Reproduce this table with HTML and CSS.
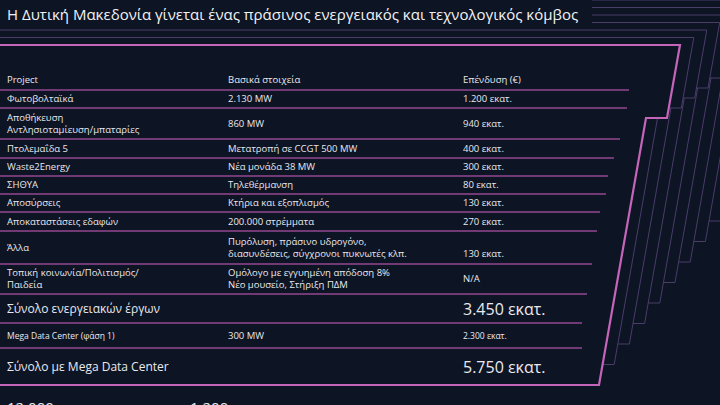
FILE: index.html
```html
<!DOCTYPE html>
<html lang="el">
<head>
<meta charset="utf-8">
<title>Δυτική Μακεδονία</title>
<link rel="stylesheet" href="styles.css">
</head>
<body>
<div class="slide">
  <svg class="deco" width="720" height="405" viewBox="0 0 720 405">
    <g class="echo">
      <polygon points="-5,-15 790,-15 783,38 752.8,38 720.6,221 -5,221"/>
      <polygon points="-5,-7.5 771,-7.5 761.5,48 739.5,48 705.4,241.5 -5,241.5"/>
      <polygon points="-5,0 758.4,0 748.1,58 726.1,58 690.2,262 -5,262"/>
      <polygon points="-5,7.5 745.6,7.5 734.8,68 712.8,68 675,282.5 -5,282.5"/>
      <polygon points="-5,15 732.6,15 721.4,78 699.4,78 659.8,303 -5,303"/>
      <polygon points="-5,22.5 719.7,22.5 708,88 686,88 644.6,323.5 -5,323.5"/>
      <polygon points="-5,30 706.8,30 694.7,98 672.7,98 629.4,344 -5,344"/>
      <polygon points="-5,37.5 693.8,37.5 681.3,108 659.3,108 614.2,364.5 -5,364.5"/>
    </g>
    <polygon class="main" points="-5,45 680,45 667,118 646,118 599,385 -5,385"/>
  </svg>

  <h1 class="title">Η Δυτική Μακεδονία γίνεται ένας πράσινος ενεργειακός και τεχνολογικός κόμβος</h1>

  <div class="table">
    <div class="row r-head"><div>Project</div><div>Βασικά στοιχεία</div><div>Επένδυση (€)</div></div>
    <div class="row r1"><div>Φωτοβολταϊκά</div><div>2.130 MW</div><div>1.200 εκατ.</div></div>
    <div class="row r2 top"><div>Αποθήκευση<br>Αντλησιοταμίευση/μπαταρίες</div><div>860 MW</div><div>940 εκατ.</div></div>
    <div class="row r3"><div>Πτολεμαΐδα 5</div><div>Μετατροπή σε CCGT 500 MW</div><div>400 εκατ.</div></div>
    <div class="row r4"><div>Waste2Energy</div><div>Νέα μονάδα 38 MW</div><div>300 εκατ.</div></div>
    <div class="row r5"><div>ΣΗΘΥΑ</div><div>Τηλεθέρμανση</div><div>80 εκατ.</div></div>
    <div class="row r6"><div>Αποσύρσεις</div><div>Κτήρια και εξοπλισμός</div><div>130 εκατ.</div></div>
    <div class="row r7"><div>Αποκαταστάσεις εδαφών</div><div>200.000 στρέμματα</div><div>270 εκατ.</div></div>
    <div class="row r8 top"><div>Άλλα</div><div>Πυρόλυση, πράσινο υδρογόνο,<br>διασυνδέσεις, σύγχρονοι πυκνωτές κλπ.</div><div class="low">130 εκατ.</div></div>
    <div class="row r9 top"><div>Τοπική κοινωνία/Πολιτισμός/<br>Παιδεία</div><div>Ομόλογο με εγγυημένη απόδοση 8%<br>Νέο μουσείο, Στήριξη ΠΔΜ</div><div>N/A</div></div>
    <div class="row r10 total"><div class="total-label">Σύνολο ενεργειακών έργων</div><div></div><div class="total-value">3.450 εκατ.</div></div>
    <div class="row r11 small"><div>Mega Data Center (φάση 1)</div><div class="mid">300 MW</div><div>2.300 εκατ.</div></div>
    <div class="row r12 total"><div class="total-label">Σύνολο με Mega Data Center</div><div></div><div class="total-value">5.750 εκατ.</div></div>
  </div>

  <div class="below"><span class="b1">12.000</span><span class="b2">1.200</span></div>
</div>
</body>
</html>
```

FILE: styles.css
```css
html, body {
  margin: 0;
  padding: 0;
  background: #0d1424;
}

.slide {
  position: relative;
  width: 720px;
  height: 405px;
  overflow: hidden;
  background: #0d1424;
  color: #e9e9ee;
  font-family: "Open Sans", "Noto Sans", sans-serif;
}

.deco {
  position: absolute;
  left: 0;
  top: 0;
  z-index: 0;
}

.deco .echo polygon {
  fill: #0d1424;
  stroke: #4a3d68;
  stroke-width: 1;
}

.deco .main {
  fill: #0d1424;
  stroke: #c565b9;
  stroke-width: 2.2;
}

.title {
  position: relative;
  z-index: 1;
  margin: 0;
  width: 592px;
  height: 27px;
  padding-left: 7px;
  box-sizing: border-box;
  background: #0d1424;
  font-weight: 400;
  font-size: 15px;
  line-height: 28px;
  white-space: nowrap;
  color: #f2f2f4;
}

.table {
  position: relative;
  z-index: 1;
  margin-top: 43px;
  font-size: 9.5px;
  line-height: 12px;
}

.row {
  display: grid;
  grid-template-columns: 221px 235px 1fr;
  align-items: center;
  padding-left: 7px;
  box-sizing: border-box;
  border-bottom: 2px solid #713a74;
  white-space: nowrap;
}

.low {
  padding-top: 12px;
}

.r-head { height: 21px; width: 629px; }
.r1 { height: 18px; width: 627px; }
.r2 { height: 31px; width: 620px; }
.r3 { height: 19px; width: 614px; }
.r4 { height: 18px; width: 608px; }
.r5 { height: 18px; width: 606px; }
.r6 { height: 18px; width: 600px; }
.r7 { height: 19px; width: 597px; }
.r8 { height: 33px; width: 592px; }
.r9 { height: 30px; width: 587px; }
.r10 { height: 29px; width: 582px; }
.r11 { height: 25px; width: 582px; }
.r12 { height: 36px; width: 582px; border-bottom: none; }

.total-label {
  font-size: 12px;
}

.total-value {
  font-size: 16px;
}

.small {
  font-size: 8.5px;
}

.small .mid {
  font-size: 9.5px;
}

.below {
  position: relative;
  z-index: 1;
  display: flex;
  padding-left: 7px;
  margin-top: 12px;
  font-size: 15px;
  line-height: 20px;
}

.b1 {
  width: 183px;
}
```
